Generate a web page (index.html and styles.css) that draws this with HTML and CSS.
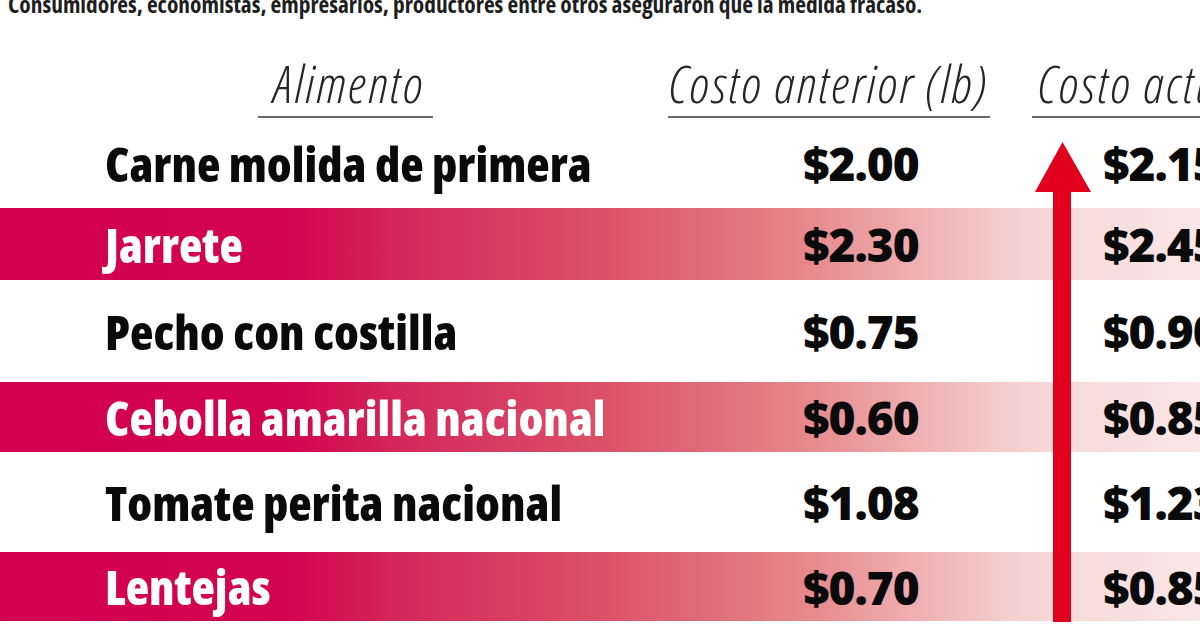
FILE: index.html
```html
<!DOCTYPE html>
<html lang="es">
<head>
<meta charset="utf-8">
<title>Costo de alimentos</title>
<link rel="stylesheet" href="styles.css">
</head>
<body>
<div class="page">
  <p class="subtitle">Consumidores, economistas, empresarios, productores entre otros aseguraron que la medida fracasó.</p>
  <div class="header">
    <div class="hcol hcol-food">Alimento</div>
    <div class="hcol hcol-prev">Costo anterior (lb)</div>
    <div class="hcol hcol-now">Costo actual (lb)</div>
  </div>
  <div class="table">
    <div class="row"><span class="name">Carne molida de primera</span><span class="price">$2.00</span><span class="price">$2.15</span></div>
    <div class="row band"><span class="name">Jarrete</span><span class="price">$2.30</span><span class="price">$2.45</span></div>
    <div class="row"><span class="name">Pecho con costilla</span><span class="price">$0.75</span><span class="price">$0.90</span></div>
    <div class="row band"><span class="name">Cebolla amarilla nacional</span><span class="price">$0.60</span><span class="price">$0.85</span></div>
    <div class="row"><span class="name">Tomate perita nacional</span><span class="price">$1.08</span><span class="price">$1.23</span></div>
    <div class="row band"><span class="name">Lentejas</span><span class="price">$0.70</span><span class="price">$0.85</span></div>
  </div>
  <svg class="arrow" width="56" height="480" viewBox="0 0 56 480" aria-hidden="true">
    <polygon points="0,50 27.5,0 56,50" fill="#e1001e"/>
    <rect x="18" y="48" width="18" height="432" fill="#e1001e"/>
  </svg>
</div>
</body>
</html>
```
FILE: styles.css
```css
html, body {
  margin: 0;
  padding: 0;
  background: #ffffff;
}

.page {
  position: relative;
  width: 1200px;
  height: 630px;
  overflow: hidden;
  background: #ffffff;
}

.subtitle {
  margin: 0;
  padding-left: 8px;
  font-family: "Open Sans", "Liberation Sans", sans-serif;
  font-weight: 700;
  font-stretch: 75%;
  font-size: 23.4px;
  line-height: 8px;
  height: 8px;
  color: #1e1e1e;
  white-space: nowrap;
}

.header {
  display: flex;
  align-items: flex-end;
  margin-top: 49px;
  padding-left: 258px;
  font-family: "Open Sans", "Liberation Sans", sans-serif;
  font-style: italic;
  font-weight: 300;
  font-stretch: 75%;
  font-size: 52px;
  letter-spacing: 2.2px;
  line-height: 1;
  color: #262626;
}

.hcol {
  flex: none;
  padding-bottom: 7px;
  border-bottom: 2px solid #6a6a6a;
  white-space: nowrap;
}

.hcol-food {
  width: 175px;
  padding-left: 8px;
  box-sizing: border-box;
  text-align: center;
}

.hcol-prev {
  width: 322px;
  margin-left: 235px;
  text-align: center;
}

.hcol-now {
  width: 322px;
  margin-left: 42px;
  padding-left: 6px;
  box-sizing: border-box;
  text-align: left;
}

.table {
  display: grid;
  grid-template-rows: 90px 72px 102px 70px 100px 69px;
}

.row {
  display: grid;
  grid-template-columns: 698px 300px 1fr;
  align-items: center;
  padding-left: 105px;
  line-height: 1;
  color: #0a0a0a;
}

.band {
  background: linear-gradient(to right,
    #d3004f 0px,
    #d30450 290px,
    #d4285a 400px,
    #d83c62 500px,
    #dc5068 600px,
    #e06a78 700px,
    #e6868a 800px,
    #eeaaac 900px,
    #f5cccc 1000px,
    #f7d8d8 1050px,
    #fae6e6 1200px);
}

.name {
  font-family: "Open Sans", "Liberation Sans", sans-serif;
  font-weight: 800;
  font-stretch: 75%;
  font-size: 48.3px;
  white-space: nowrap;
}

.band .name {
  color: #ffffff;
}

.price {
  font-family: "Open Sans", "Liberation Sans", sans-serif;
  font-weight: 800;
  font-size: 46px;
  letter-spacing: -1px;
  white-space: nowrap;
}

.arrow {
  position: absolute;
  left: 1035px;
  top: 142px;
}
```
